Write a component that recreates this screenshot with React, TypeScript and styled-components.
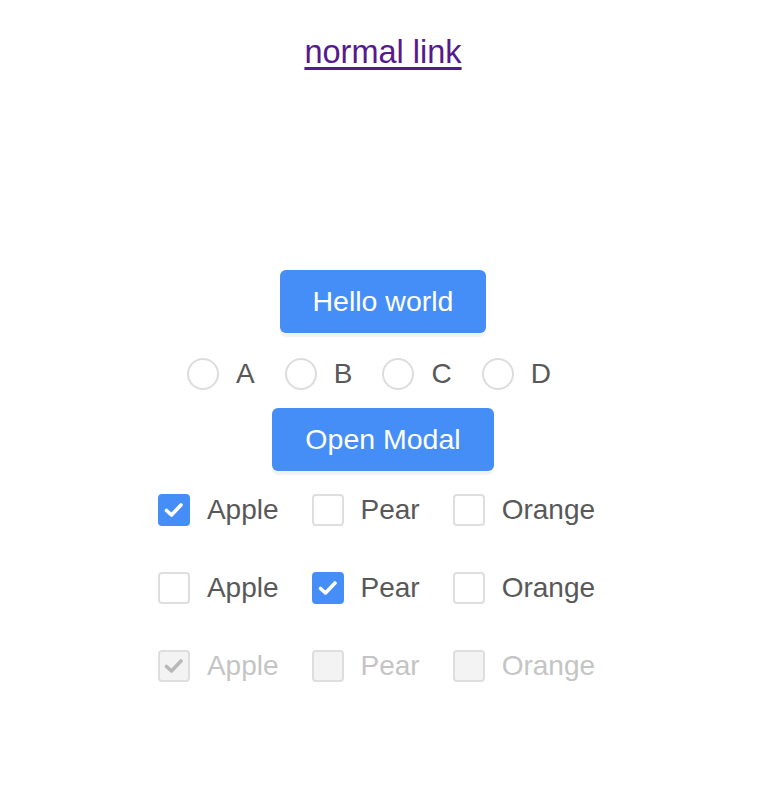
import React from "react";
import styled, { createGlobalStyle } from "styled-components";

const Global = createGlobalStyle`
  body {
    margin: 8px;
    background: #ffffff;
    font-family: "Liberation Sans", Arial, sans-serif;
  }
`;

const Page = styled.div`
  display: flex;
  flex-direction: column;
  align-items: center;
`;

const LinkBar = styled.div`
  margin-top: 26px;
  font-size: 32.5px;
  line-height: 37px;
`;

const NormalLink = styled.a`
  color: #551a8b;
  text-decoration: underline;
  text-underline-offset: 4px;
`;

const Main = styled.div`
  margin-top: 199px;
  display: flex;
  flex-direction: column;
  align-items: center;
`;

const Button = styled.button`
  height: 63px;
  padding: 0 33px;
  border: none;
  border-radius: 6px;
  background: #458ef7;
  color: #ffffff;
  font-family: "Liberation Sans", Arial, sans-serif;
  font-size: 28.5px;
  box-shadow: 0 4px 1px rgba(0, 0, 0, 0.05);
  cursor: pointer;
`;

const RadioGroup = styled.div`
  display: flex;
  margin: 25px 0 18px;
  padding-left: 2px;
`;

const RadioItem = styled.label`
  display: flex;
  align-items: center;
  gap: 17px;
  margin-right: 30px;
  font-size: 28px;
  color: #585858;
`;

const RadioCircle = styled.span`
  width: 32px;
  height: 32px;
  box-sizing: border-box;
  border: 2px solid #dcdcdc;
  border-radius: 50%;
`;

const CheckRows = styled.div`
  margin-top: 23px;
  display: flex;
  flex-direction: column;
  gap: 46px;
`;

const CheckRow = styled.div`
  display: flex;
  height: 32px;
  padding-left: 20px;
`;

const CheckItem = styled.label<{ $disabled?: boolean }>`
  display: flex;
  align-items: center;
  gap: 17px;
  margin-right: 33px;
  font-size: 28px;
  color: ${(p) => (p.$disabled ? "#c4c4c4" : "#585858")};
`;

const Box = styled.span<{ $checked?: boolean; $disabled?: boolean }>`
  width: 32px;
  height: 32px;
  box-sizing: border-box;
  border-radius: 4px;
  display: flex;
  align-items: center;
  justify-content: center;
  border: 2px solid
    ${(p) => (p.$checked && !p.$disabled ? "#458ef7" : "#dedede")};
  background: ${(p) =>
    p.$disabled ? "#f3f3f3" : p.$checked ? "#458ef7" : "#ffffff"};
`;

const Check = ({ color }: { color: string }) => (
  <svg width="20" height="16" viewBox="0 0 20 16">
    <path
      d="M2.5 8.5 L7.5 13 L17 3"
      fill="none"
      stroke={color}
      strokeWidth="3.6"
      strokeLinecap="round"
      strokeLinejoin="round"
    />
  </svg>
);

const fruits = ["Apple", "Pear", "Orange"];

const rows: { checked: string | null; disabled?: boolean }[] = [
  { checked: "Apple" },
  { checked: "Pear" },
  { checked: "Apple", disabled: true },
];

export default function App() {
  return (
    <Page>
      <Global />
      <LinkBar>
        <NormalLink href="#">normal link</NormalLink>
      </LinkBar>
      <Main>
        <Button>Hello world</Button>
        <RadioGroup>
          {["A", "B", "C", "D"].map((l) => (
            <RadioItem key={l}>
              <RadioCircle />
              {l}
            </RadioItem>
          ))}
        </RadioGroup>
        <Button>Open Modal</Button>
        <CheckRows>
          {rows.map((r, i) => (
            <CheckRow key={i}>
              {fruits.map((f) => {
                const checked = r.checked === f;
                return (
                  <CheckItem key={f} $disabled={r.disabled}>
                    <Box $checked={checked} $disabled={r.disabled}>
                      {checked && (
                        <Check color={r.disabled ? "#b8b8b8" : "#ffffff"} />
                      )}
                    </Box>
                    {f}
                  </CheckItem>
                );
              })}
            </CheckRow>
          ))}
        </CheckRows>
      </Main>
    </Page>
  );
}
